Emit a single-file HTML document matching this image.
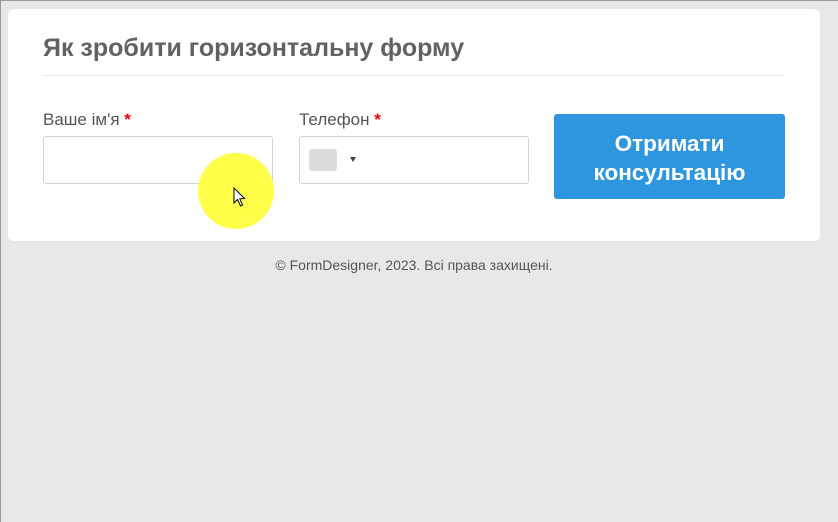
<!DOCTYPE html>
<html><head><meta charset="utf-8"><style>
html,body{margin:0;padding:0}
body{width:838px;height:522px;background:#e8e8e8;font-family:"Liberation Sans",Arial,sans-serif;position:relative;overflow:hidden}
.bl{position:absolute;left:0;top:0;width:1px;height:522px;background:#999}
.bt{position:absolute;left:0;top:0;width:838px;height:1px;background:#999}
.card{position:absolute;left:8px;top:9px;width:812px;height:232px;background:#fff;border-radius:6px}
h1{position:absolute;left:35px;top:25px;margin:0;font-size:25px;font-weight:bold;color:#626262}
.hr{position:absolute;left:35px;top:66px;width:741px;height:1px;background:#e3eeee}
.lbl{position:absolute;top:101px;font-size:17px;color:#555}
.lbl b{color:#e00;font-weight:bold}
.inp{position:absolute;top:127px;width:230px;height:48px;border:1px solid #cdd7d7;border-radius:3px;box-sizing:border-box;background:#fff}
.flag{position:absolute;left:9px;top:12px;width:28px;height:22px;background:#dcdcdc;border-radius:3px}
.arr{position:absolute;left:50px;top:20px;width:0;height:0;border-left:3px solid transparent;border-right:3px solid transparent;border-top:5px solid #444}
.btn{position:absolute;left:546px;top:105px;width:231px;height:85px;background:#2d96de;border-radius:3px;color:#fff;font-weight:bold;font-size:22.5px;text-align:center;line-height:29px;padding-top:15px;box-sizing:border-box}
.foot{position:absolute;left:0;width:828px;top:257px;text-align:center;font-size:14px;color:#555}
.dot{position:absolute;left:198px;top:153px;width:76px;height:76px;border-radius:50%;background:#ffff4a}
</style></head><body>
<div class="bl"></div><div class="bt"></div>
<div class="card">
<h1>Як зробити горизонтальну форму</h1>
<div class="hr"></div>
<div class="lbl" style="left:35px">Ваше ім'я <b>*</b></div>
<div class="lbl" style="left:291px">Телефон <b>*</b></div>
<div class="inp" style="left:35px"></div>
<div class="inp" style="left:291px"><div class="flag"></div><div class="arr"></div></div>
<div class="btn">Отримати<br>консультацію</div>
</div>
<div class="dot"></div>
<svg style="position:absolute;left:233px;top:187px" width="14" height="22" viewBox="0 0 14 22"><path d="M1 1 L1 16 L4.5 12.5 L7.5 19 L9.5 18 L6.8 11.8 L11.5 11.5 Z" fill="#fff" stroke="#000" stroke-width="1"/></svg>
<div class="foot">© FormDesigner, 2023. Всі права захищені.</div>
</body></html>
